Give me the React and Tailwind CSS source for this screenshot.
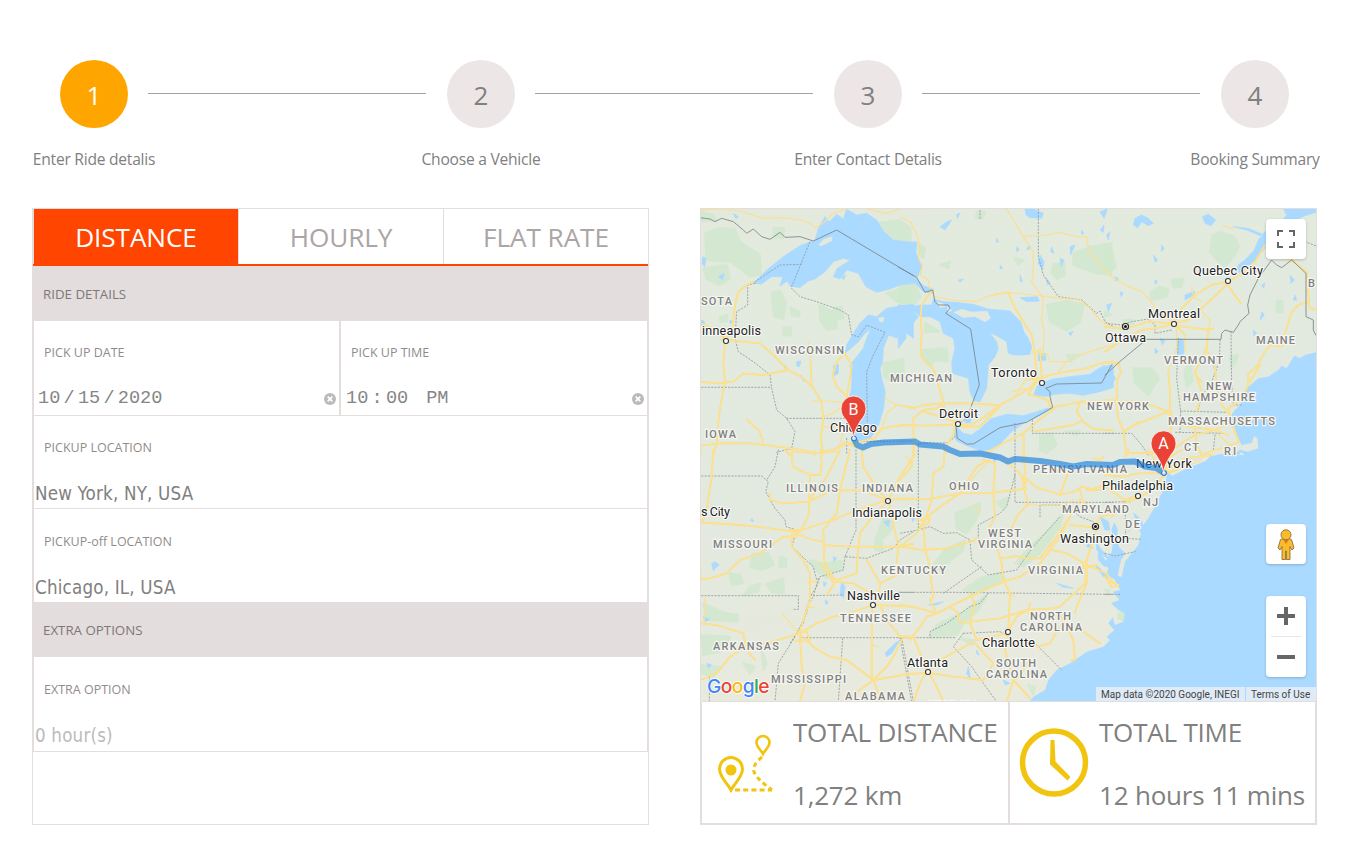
import React from "react";

const steps = [
  { n: 1, label: "Enter Ride detalis", active: true },
  { n: 2, label: "Choose a Vehicle" },
  { n: 3, label: "Enter Contact Detalis" },
  { n: 4, label: "Booking Summary" },
];

/* The map is drawn in tiles; every tile has its own offset on the 1845x1476 canvas. */
const tiles = [
  {
    x: -3, y: -12,
    parks: [
      "15,85 60,68 105,72 120,110 180,150 182,208 150,215 120,190 90,170 20,165", "0,20 40,30 50,45 0,50", "10,190 80,180 90,220 60,240 20,222",
      "220,70 252,68 250,100 222,98", "358,300 400,320 412,370 380,375 360,345", "272,308 300,320 296,335 275,330", "215,262 240,258 258,292 250,342 222,335",
      "250,368 275,366 272,392 250,390", "550,475 610,462 612,520 575,530 552,515", "530,55 600,45 632,70 632,110 590,108 560,80", "560,265 632,240 632,300 590,290", "400,310 425,305 430,340 408,345", "60,335 82,330 80,350 62,350",
    ],
    water: [
      "160,235 200,195 250,155 300,122 345,105 355,70 375,35 388,50 410,28 430,42 440,12 470,30 500,25 530,45 550,78 580,105 640,113 640,235 600,240 570,252 530,262 498,245 475,205 440,195 420,222 400,215 412,190 452,165 430,160 400,170 375,200 345,222 325,228 300,248 270,243 262,228 240,243 248,215 215,215 185,237",
      "505,330 530,335 560,310 600,303 640,298 640,400 620,385 600,360 592,400 566,390 550,430 548,470 540,490 545,520 556,560 551,610 536,660 515,695 490,712 470,708 455,680 447,640 445,590 454,550 456,520 450,480 470,455 490,430 500,400 512,372 495,385 475,410 455,428 435,445 440,420 462,382 480,355",
      "400,482 415,478 415,505 403,512", "8,155 18,160 14,185 6,175", "55,215 72,205 68,225", "0,345 12,348 15,362 0,360",
      "290,470 303,468 298,485 290,482", "100,25 115,35 108,42", "425,215 438,210 430,225",
      "300,510 306,515 312,530", "255,480 260,492 252,488", "90,345 98,350 90,356",
    ],
    land: ["355,120 370,103 398,94 395,108 365,123", "535,338 552,335 550,352 538,350"],
    minor: [
      "0,15 60,12 120,18 190,40 250,38 300,45 330,55 345,68 375,50 400,25 440,12", "325,410 332,470", "335,588 380,588 430,592", "370,665 430,668",
      "372,635 400,625 430,600", "555,580 590,600 560,625 545,670", "590,600 640,607", "0,722 5,750", "430,680 420,720 400,735", "500,12 560,25 600,12",
    ],
    major: [
      "160,230 140,240 115,260 105,300 98,365 82,395", "0,355 25,365 60,385 80,405", "80,405 110,408 180,415 220,450 265,495 310,520 340,550 365,590 370,640 362,700 370,745",
      "75,405 70,470 75,530 60,610 55,650 50,720 40,750", "0,530 60,535 100,530 130,505 190,510 265,495", "332,470 335,545", "435,445 410,470 398,510 410,545 440,575",
      "435,445 455,480 450,520 440,575 447,600", "0,722 60,715 150,715 260,728 300,735 350,745", "140,643 180,680 188,710", "545,670 525,700 470,712 430,715", "540,675 570,665 640,660", "362,740 400,735 440,715 480,730", "62,405 100,405", "255,735 270,750",
    ],
    dashed: [
      "165,235 143,240 143,300 110,320 105,400 115,440 160,470 210,510 215,550 230,615 260,640 285,680 275,730 230,742", "5,547 215,547", "260,640 440,640", "275,245 330,110",
      "165,230 240,180 305,178", "275,250 300,275 350,290 420,315 445,330 455,390 475,395 500,360 555,382 520,450 500,500 502,650", "440,700 440,750", "480,710 640,708",
    ],
    solid: ["0,38 30,42 45,50 65,40 100,50 130,75 140,85 160,72 185,95 210,103 240,82 255,97 300,95 340,108 410,75 640,212"],
  },
  {
    x: 597, y: -12,
    parks: [
      "0,240 45,235 62,275 40,302 0,292", "75,352 118,380 75,382", "68,435 140,430 143,470 105,465 90,485 70,460", "440,300 500,288 552,300 540,350 500,378 450,350",
      "520,145 570,125 635,115 635,210 590,205 560,195 520,180", "460,178 492,172 495,210 470,222 455,205", "420,690 455,685 470,720 440,745 420,735", "343,160 372,165 355,180", "230,20 255,22 245,42 228,38", "495,680 540,678 530,690", "120,180 150,170 145,190", "500,450 540,450 510,470", "55,115 75,130 70,160 58,150",
    ],
    water: [
      "-5,113 50,110 48,145 65,180 62,205 53,213 50,222 72,243 98,252 100,265 70,260 45,235 20,228 -5,235",
      "-5,300 25,302 50,325 62,335 90,335 120,350 130,385 160,400 165,430 155,470 157,505 205,520 210,560 222,588 240,590 260,550 262,520 265,480 285,455 295,430 290,410 268,382 290,392 320,410 325,445 342,450 365,450 390,448 395,425 385,400 372,382 362,350 330,318 265,312 220,298 170,292 130,290 100,282 95,300 62,300 30,305",
      "-5,300 28,305 55,335 42,352 18,370 18,400 -5,430",
      "170,665 190,685 215,690 240,672 272,642 320,628 370,632 410,620 440,610 458,610 420,632 370,655 335,680 290,728 245,738 200,722 170,708 160,690",
      "400,572 410,545 430,532 460,522 510,515 570,508 600,488 640,478 640,548 600,560 550,571 510,565 465,568 440,574",
      "415,447 435,445 438,465 415,468", "360,278 412,275 418,288 380,290", "193,630 215,625 212,652 197,655", "375,12 400,12 430,25 425,40 390,38 378,30",
      "120,65 140,50 155,45 135,75", "170,28 180,25 172,40", "420,150 432,170 428,195 415,175", "440,220 450,235 442,240", "480,160 492,165 484,185", "510,125 525,120 512,150", "388,120 380,135 392,130", "455,125 462,145 452,140", "545,75 552,85 544,88", "600,20 622,12 612,40", "600,75 612,60 610,82", "290,100 296,112 288,110", "175,225 190,222 180,232", "360,210 368,230 360,228", "300,180 308,190 300,192", "350,125 358,135 350,140", "505,385 520,378 512,392", "620,90 630,80 625,105",
    ],
    land: ["160,322 185,312 215,320 262,318 272,340 255,352 225,335 190,338", "110,290 128,295 138,305 120,308", "140,305 158,315 145,322"],
    minor: [
      "0,35 30,50 50,85 60,130 55,160 68,185 58,208 85,225 90,250", "320,12 340,45 370,95 400,140 400,210 395,230 420,265 430,280 425,340 432,380 430,440",
      "370,95 440,90 480,82 530,95 560,95 565,130 600,180 640,220", "100,275 160,285 230,290 260,275 320,262 400,270 470,278 540,285 570,310 600,345 640,370",
      "440,445 450,470 500,470 540,450 600,430 640,420", "335,560 380,550", "500,470 475,500", "380,520 340,580",
    ],
    major: [
      "285,268 325,262 345,310 370,350 395,390 402,430 410,500 405,530", "100,255 85,270 65,300 62,330 65,380 62,450 75,470 100,490 115,540 130,590", "0,600 40,610 70,600 130,595 200,595 290,600",
      "0,660 80,662 150,660 175,655", "42,750 40,640 70,615 110,610 130,595", "70,620 120,635 165,650", "175,660 215,658 250,638 300,600 340,578 390,550 410,525 440,512 500,500 560,490 600,475 640,470",
      "185,665 240,665 300,603", "410,530 385,568 430,580 450,590", "420,435 425,510", "440,582 450,605 465,608 430,635 370,685 300,720 255,745", "465,605 500,600 540,590 580,590 640,585",
      "540,590 530,620 550,650 580,672 640,676", "400,680 460,670 520,660 545,648", "370,685 372,745", "165,650 160,690 140,720", "400,440 420,440 430,450", "385,525 440,515", "130,595 135,635",
    ],
    dashed: ["415,12 415,155 430,210 475,275 545,285 590,325 600,318 615,350 640,365", "345,655 345,750", "55,750 55,715 145,713 165,695", "397,645 397,685 640,685", "215,600 200,640 172,660", "240,40 240,12"],
    solid: ["-5,186 50,217 75,262 98,255 105,290 115,300 145,300 150,310 137,325 212,372 238,540 215,600", "168,665 172,700 200,717 220,717 300,668 380,652 458,607 450,575 450,560 437,550 470,537 605,534 635,480"],
  },
  {
    x: 1212, y: -12,
    parks: [
      "322,92 345,80 388,95 402,125 390,150 360,185 335,165 315,140", "0,118 20,130 32,190 0,200", "135,262 165,245 190,252 185,275 140,285", "200,225 235,220 230,245 205,248", "85,490 140,490 162,520 130,570 90,535",
      "515,287 532,287 532,322 515,322", "238,500 258,470 262,530 245,545", "55,345 85,345 85,358 60,360", "375,455 398,450 392,475 378,490", "0,320 20,330 0,335",
    ],
    water: [
      "535,12 545,30 520,60 480,80 460,105 448,135 420,165 400,180 385,212 410,198 450,165 490,118 520,75 560,50 600,32 640,20 640,12", "218,402 234,402 238,440 226,468 218,448",
      "-5,480 18,500 32,520 15,545 -5,550", "90,40 110,30 130,40 145,55 130,62 110,50 98,68 85,60", "292,35 310,28 332,45 318,62 300,55", "240,270 270,258 265,270 240,285", "470,320 478,330 466,345",
      "165,400 180,405 172,420", "30,215 42,222 30,228", "145,150 158,165 150,172", "385,65 430,70 472,88 465,92 425,75", "555,210 568,225 558,235", "570,270 575,285 565,285", "170,120 178,130 170,140", "20,295 10,320 5,300", "45,260 55,265 48,275", "150,225 158,230 150,238", "325,470 332,475 326,490", "445,375 455,385 446,392", "150,430 160,440 150,446", "470,240 480,235 476,250",
    ],
    land: [],
    minor: ["0,195 20,215 60,240 110,260 130,280 160,320 200,350", "355,62 385,72", "260,245 265,275 290,290", "290,320 315,345 312,375", "340,690 375,720", "215,365 215,430 190,500", "240,390 240,440", "100,650 55,680"],
    major: [
      "0,440 60,400 110,375 150,370 205,358", "0,365 60,372 130,350 205,355", "205,355 230,310 270,270 320,240 370,230 420,200 450,170 480,120", "205,355 250,345 300,300 365,240", "365,235 385,265 408,295",
      "210,365 240,365 310,375 325,370", "213,360 240,390", "190,500 195,560 195,610 200,640 190,740", "310,370 305,430 270,500 290,560 275,620", "300,430 330,480 335,540 350,600 375,630", "0,472 40,475 48,500 35,530 35,600 40,640 55,680 65,750",
      "0,590 100,590 150,605 190,620 195,650 250,665 330,675 375,650", "55,680 100,655 190,620", "375,640 370,610 400,590 430,540 430,505 455,485 480,440 495,420 530,425 545,370 560,320 580,300 612,290 605,200 560,165 520,155", "435,530 465,480",
      "375,640 390,680 402,710 380,720 330,735 290,750", "270,670 275,720 290,750", "60,745 190,742 230,715 270,690 330,675", "610,290 615,310 635,315", "290,530 270,510", "330,675 370,690",
    ],
    dashed: ["0,685 80,685 110,720 130,750", "220,400 215,520 227,620 225,680", "345,405 343,470 320,530 290,575 277,620", "378,380 380,540 385,600 410,600", "227,618 370,622", "212,682 360,685", "330,690 325,735", "0,355 50,360 80,350 130,342 150,360 150,385 200,375", "600,110 640,125"],
    solid: ["0,510 50,465 125,403 348,403 350,385 360,375 385,382 400,360 405,350 432,325 428,300 435,270 460,220 500,165 515,180 530,188 560,165 603,205 603,335 625,345 625,375 632,390"],
  },
  {
    x: -3, y: 723,
    parks: [
      "158,312 205,308 222,345 185,360 150,350", "198,402 250,385 252,430 215,428", "88,370 122,375 130,400 95,405", "330,330 370,340 425,332 430,360 400,365 380,385 340,355", "10,460 80,490 115,495 112,515 20,510",
      "5,555 90,560 85,580 60,605 10,615", "550,205 580,215 575,240 545,270 550,305 525,300 525,270", "180,400 175,425 130,435 150,410", "240,320 260,325 258,352 238,350", "185,600 200,640 190,660", "130,640 165,650 150,670", "0,645 60,650 40,680 0,670",
    ],
    water: ["35,342 45,335 58,345 48,352 40,362", "425,395 435,410 430,445 420,430", "555,610 585,580 600,570 575,610 560,620", "550,215 570,210 565,230", "375,450 385,455 378,465", "155,205 162,215 152,212", "400,320 410,325 402,335", "20,640 35,645 25,655", "370,395 380,400 372,410", "10,500 30,508 15,515"],
    land: [],
    minor: ["275,5 340,10 420,5", "245,490 280,530 295,550", "0,320 3,385", "15,440 12,520", "345,18 345,0", "515,585 535,590", "320,470 345,472"],
    major: [
      "40,0 35,80 20,180 8,215", "0,218 80,222 170,230 280,245", "275,0 278,50 330,75 360,75 365,40 362,0", "420,0 400,40 380,80 350,120 325,155 250,160 210,150 210,130", "330,75 328,155 325,200 300,245",
      "450,0 420,120 410,190 370,240 372,330 390,370 410,395", "325,155 400,120 490,122 560,150 640,145", "280,248 400,210 470,180 560,150", "280,248 340,270 370,275", "290,260 250,260 180,310 120,330 80,370 30,385 0,388",
      "370,285 440,290 600,290 640,282", "270,240 300,240 280,262", "275,255 275,290 310,330 330,370 330,450 300,540", "485,0 490,50 520,100 560,150", "640,20 600,80 565,150 580,220 595,290 590,340", "560,155 510,210 480,250 472,320 470,370 410,390 380,435",
      "360,340 400,395 460,400 510,430 520,450", "500,330 540,400 600,370", "540,400 535,450", "0,520 50,525 130,550", "130,550 140,600 165,630", "130,595 200,580 300,550", "300,550 350,520 400,500 430,495 520,465 640,470", "295,550 340,590 390,620 440,630 520,690",
      "300,560 305,650 315,700 300,755", "285,572 330,572 320,545 295,545", "515,465 515,690", "540,465 560,510 600,560 640,560", "520,690 560,650 580,620 608,565", "520,690 640,670", "520,690 430,755", "520,690 545,755", "0,690 50,670 90,620 130,595", "350,395 325,395",
    ],
    dashed: [
      "5,78 185,78 205,95 197,125 225,175 255,210 258,230 290,240 275,290 340,350 350,390", "235,0 225,50 200,90", "468,0 468,240 435,320 500,325 580,295 600,270 640,245", "435,320 430,360 360,380 350,410 330,440 320,490 285,560 235,640 225,755",
      "5,437 295,437 295,478 278,478", "355,385 340,440 320,470 310,520 270,580", "330,437 430,435", "300,563 605,563", "428,565 415,755", "605,563 640,755", "595,427 640,427", "28,680 28,755",
    ],
    solid: [],
  },
  {
    x: 597, y: 723,
    parks: [
      "165,190 240,158 240,185 225,215 200,250 170,235", "90,355 135,300 195,270 190,300 120,360", "345,340 390,290 450,235 490,190 480,230 420,310 370,350", "190,420 240,385 300,368 315,385 220,435", "88,560 110,525 190,485 265,430 235,480 195,515 170,555", "180,565 225,570 215,585", "385,705 405,710 400,735", "290,155 330,140 310,180",
    ],
    water: ["85,465 130,455 110,465", "590,280 605,300 635,330 615,320 590,300", "585,345 600,355 625,385 610,380", "205,650 212,690 200,670", "565,280 580,295 560,290", "35,200 45,205 38,215", "470,400 520,415 490,412", "230,600 238,615 230,612", "310,690 330,700 315,705", "280,20 290,30 282,35"],
    land: [],
    minor: ["380,165 490,165 520,150", "180,130 230,70 270,30", "235,190 225,165", "320,430 345,440", "35,45 20,20"],
    major: [
      "40,0 35,50 0,90", "135,0 130,50 100,70 95,150 75,210", "0,145 80,148 180,130 260,130 345,120 380,115", "255,35 230,50 180,130", "250,30 285,40 280,130 285,200 270,230", "70,210 120,170 180,130", "75,210 50,250 0,290",
      "70,215 75,300 85,330 100,440 90,450 110,490", "0,290 70,300 140,295 230,270", "50,210 90,205 85,220 60,225", "320,35 360,70 375,110 380,85 405,110 480,135 520,125 545,110 580,118 640,90", "370,0 375,60 370,110 385,160 350,200 335,235", "480,135 500,80 510,45",
      "225,265 290,290 305,340 310,395", "305,325 350,318 370,325 420,325 470,260 510,200", "310,395 360,380 420,340 450,300 480,260 515,190", "310,395 230,430 150,470 110,490 60,475 0,465", "315,400 330,430 325,540", "455,300 500,310 560,345 620,370 640,400",
      "510,225 585,232 600,200 640,190", "590,235 560,330 555,400 480,470 460,475", "560,345 560,400 530,470 525,490", "110,490 80,500 60,530 30,570", "210,430 225,460 210,515 300,505 380,480 460,475", "150,470 175,490 180,517 210,518 230,570 320,550 350,500 380,480",
      "390,460 385,490 400,480", "325,550 315,600 340,690 390,745", "0,675 80,668 160,680 250,690", "250,690 265,665 280,640 225,580", "80,665 120,630 220,575", "85,665 110,710 130,755", "80,665 60,700 40,755", "0,560 40,560 80,660", "410,590 450,580 470,545 490,520 550,545 600,580",
      "480,495 520,570 525,630 515,630", "340,690 320,755", "380,640 360,680 340,690", "580,25 600,30 610,20", "540,120 550,160 585,170", "600,120 560,120", "515,190 540,150", "560,330 545,355 590,345",
    ],
    dashed: [
      "55,0 55,240 0,250", "345,20 345,157 490,157 640,157", "55,240 90,230 130,250 170,248 210,270 215,330 265,375 350,360 400,290 480,200", "345,75 320,170 300,190 235,225 235,270 205,275", "420,200 420,165 500,165 540,200 580,215", "0,427 160,427 640,433", "245,350 130,430",
      "265,430 240,460 210,470 140,520 90,545 90,563", "0,563 165,563", "0,563 35,755", "190,550 300,545 330,560", "400,575 485,660", "190,550 160,590 215,650 250,700 290,755",
    ],
    solid: [],
  },
  {
    x: 1212, y: 723,
    parks: ["42,488 60,490 55,512 40,505", "0,420 15,420 10,435", "60,220 80,230 70,245"],
    water: ["-20,300 0,330 12,345 -2,350 -20,330", "-15,200 10,215 15,240 0,240"],
    land: [],
    minor: ["190,70 230,55 290,30", "60,150 90,140"],
    major: ["0,75 60,80 100,70 170,70 220,58", "165,70 220,40 240,25 320,15", "178,75 140,120 100,145 65,155 40,180 20,200", "0,110 60,150 100,135", "0,380 20,412 42,405 15,395", "130,0 150,30 175,65", "60,20 70,0", "180,60 195,20 230,0"],
    dashed: ["60,155 62,265 110,268", "0,310 30,318 90,305", "0,433 50,433", "75,155 0,157"],
    solid: [],
  },
];

const atlantic =
  "1852,428 1812,438 1797,448 1780,440 1772,453 1757,478 1742,470 1732,483 1702,503 1672,508 1642,533 1627,563 1617,588 1597,608 1587,628 1600,653 1612,688 1622,708 1652,703 1660,678 1648,674 1669,688 1672,718 1640,728 1618,722 1595,735 1560,735 1530,742 1500,748 1450,760 1400,788 1397,803 1387,843 1367,883 1342,928 1327,948 1322,933 1297,910 1307,948 1320,973 1312,1008 1292,1033 1272,1058 1262,1103 1250,1101 1260,1053 1274,1033 1254,1015 1248,985 1250,960 1240,940 1232,960 1236,1000 1232,1030 1210,1060 1222,1080 1215,1098 1240,1110 1257,1143 1235,1148 1255,1173 1230,1183 1252,1203 1272,1213 1267,1238 1242,1248 1235,1225 1222,1243 1240,1263 1217,1283 1227,1293 1207,1313 1157,1328 1107,1363 1067,1383 1042,1413 1032,1443 997,1463 975,1490 1852,1490";

const states = [
  ["SOTA", 701, 305, 31], ["IOWA", 705, 438, 31], ["WISCONSIN", 775, 354, 69], ["MICHIGAN", 890, 382, 62], ["NEW YORK", 1087, 410, 62], ["VERMONT", 1164, 364, 59],
  ["MAINE", 1256, 344, 39], ["NEW", 1206, 390, 26], ["HAMPSHIRE", 1183, 401, 72], ["MASSACHUSETTS", 1168, 425, 107], ["CT", 1184, 451, 15], ["RI", 1224, 455, 12],
  ["B", 1308, 287, 7], ["ILLINOIS", 786, 492, 52], ["INDIANA", 862, 492, 51], ["MISSOURI", 713, 548, 59], ["OHIO", 949, 490, 30], ["PENNSYLVANIA", 1033, 473, 94],
  ["WEST", 988, 537, 33], ["VIRGINIA", 978, 548, 54], ["MARYLAND", 1062, 513, 67], ["NJ", 1143, 506, 15], ["DE", 1125, 528, 15], ["KENTUCKY", 881, 574, 65],
  ["VIRGINIA", 1028, 574, 55], ["TENNESSEE", 840, 622, 71], ["ARKANSAS", 713, 650, 66], ["NORTH", 1030, 620, 41], ["CAROLINA", 1020, 631, 62], ["SOUTH", 996, 667, 40],
  ["CAROLINA", 986, 678, 61], ["MISSISSIPPI", 771, 683, 75], ["ALABAMA", 845, 700, 60], ["GEORGIA", 926, 709, 52],
];

const cities = [
  ["inneapolis", 702, 335, 59], ["Toronto", 991, 377, 46], ["Detroit", 939, 418, 39], ["Chicago", 830, 432, 47], ["Quebec City", 1193, 275, 70], ["Montreal", 1148, 318, 52],
  ["Ottawa", 1105, 342, 41], ["New York", 1136, 468, 56], ["Philadelphia", 1102, 490, 71], ["Indianapolis", 852, 517, 70], ["s City", 701, 516, 29], ["Washington", 1060, 543, 69],
  ["Nashville", 847, 600, 53], ["Charlotte", 982, 647, 53], ["Atlanta", 907, 667, 41],
];

const townDots = [[726, 341], [1042, 383], [958, 424], [1228, 281], [1174, 324], [1138, 496], [888, 501], [873, 605], [1008, 632], [928, 672]];
const capitals = [[1125.5, 326.5], [1095.5, 526.5]];

function Lines({ items, ...rest }) {
  return items.map((p, i) => <polyline key={i} points={p} fill="none" strokeLinejoin="round" strokeLinecap="round" {...rest} />);
}

function Layer({ name, render }) {
  return tiles.map((t, i) => (
    <g key={i} transform={`translate(${t.x} ${t.y})`}>{render(t[name])}</g>
  ));
}

function Pin({ x, y, letter }) {
  return (
    <g transform={`translate(${x} ${y})`}>
      <path d="M0 0C-1-8-4-12-7.5-18C-10-21-12.5-24-12.5-29.5A12.5 12.5 0 0 1 12.5-29.5C12.5-24 10-21 7.5-18C4-12 1-8 0 0Z" fill="#ea4335" stroke="#fff" strokeWidth=".8" />
      <text x="0" y="-23.5" textAnchor="middle" fontSize="16" fill="#fff" className="font-[Roboto,sans-serif]">{letter}</text>
    </g>
  );
}

function MapCanvas() {
  return (
    <svg viewBox="0 0 1845 1476" width="615" height="492" className="block">
      <defs>
        <linearGradient id="terrain" x1="0" y1="0" x2="0.2" y2="1">
          <stop offset="0" stopColor="#e3eadd" />
          <stop offset=".55" stopColor="#e2e9df" />
          <stop offset="1" stopColor="#e8eadd" />
        </linearGradient>
      </defs>
      <rect width="1845" height="1476" fill="url(#terrain)" />
      <Layer name="parks" render={(a) => a.map((p, i) => <polygon key={i} points={p} fill="#cfe8cd" opacity=".75" stroke="#cfe8cd" strokeWidth="6" strokeLinejoin="round" />)} />
      <polygon points={atlantic} fill="#aadaff" />
      <Layer name="water" render={(a) => a.map((p, i) => <polygon key={i} points={p} fill="#aadaff" stroke="#aadaff" strokeWidth="2" strokeLinejoin="round" />)} />
      <Layer name="land" render={(a) => a.map((p, i) => <polygon key={i} points={p} fill="#e3e9de" />)} />
      <polygon points="1402,783 1442,766 1502,748 1536,732 1515,755 1497,763 1452,781 1412,801" fill="#e8eadd" />
      <polygon points="1612,738 1622,730 1630,738" fill="#e8eadd" />
      <Layer name="dashed" render={(a) => <Lines items={a} stroke="#939ca1" strokeWidth="2.6" strokeDasharray="4 6" />} />
      <Layer name="minor" render={(a) => <Lines items={a} stroke="#fbdf92" strokeWidth="3.6" />} />
      <Layer name="major" render={(a) => <Lines items={a} stroke="#fbdb80" strokeWidth="5.4" />} />
      <Layer name="major" render={(a) => <Lines items={a} stroke="#ffe493" strokeWidth="2.6" />} />
      <Layer name="solid" render={(a) => <Lines items={a} stroke="#7d868c" strokeWidth="2.6" />} />
      <g transform="scale(3) translate(-701 -209)">
        <g className="font-[Roboto,sans-serif]" fontSize="11" fontWeight="500" fill="#80807e" stroke="#f5f6f2" strokeWidth="2.5" paintOrder="stroke" strokeLinejoin="round">
          {states.map(([t, x, y, w], i) => <text key={i} x={x} y={y - 0.5} textLength={w}>{t}</text>)}
        </g>
        {townDots.map(([x, y], i) => <circle key={i} cx={x} cy={y} r="2.5" fill="#fff" stroke="#333" strokeWidth="1.1" />)}
        {capitals.map(([x, y], i) => (
          <g key={i}>
            <circle cx={x} cy={y} r="3" fill="#fff" stroke="#222" strokeWidth="1.2" />
            <circle cx={x} cy={y} r="1.5" fill="#111" />
          </g>
        ))}
        <g className="font-[Roboto,sans-serif]" fontSize="12.6" fill="#202124" stroke="#fbfbf8" strokeWidth="2.2" paintOrder="stroke" strokeLinejoin="round">
          {cities.map(([t, x, y, w], i) => <text key={i} x={x} y={y - 0.5} textLength={w}>{t}</text>)}
        </g>
        <polyline
          points="854,439 857,445 863,447.5 871,444 884,442.5 900,442 915,441.5 920,444.5 943,446.5 950,450 960,454 980,453.5 1000,457.5 1008,461.5 1015,459 1040,461 1060,464 1073,466.5 1087,464 1113,465 1120,462 1135,461.5 1145,466.5 1156,468 1164,473"
          fill="none" stroke="#1a80de" strokeOpacity=".65" strokeWidth="6" strokeLinejoin="round" strokeLinecap="round"
        />
        <circle cx="854" cy="438.500" r="2.400" fill="#cfe6ff" stroke="#2b6cb0" strokeWidth="1" />
        <circle cx="1164" cy="473" r="2.400" fill="#cfe6ff" stroke="#2b6cb0" strokeWidth="1" />
        <Pin x={853.5} y={438} letter="B" />
        <Pin x={1163.5} y={472.8} letter="A" />
      </g>
    </svg>
  );
}

function ClearIcon() {
  return (
    <svg width="12" height="12" viewBox="0 0 12 12" className="block">
      <circle cx="6" cy="6" r="6" fill="#bababa" />
      <path d="M3.7 3.7l4.6 4.6M8.3 3.7L3.7 8.3" stroke="#fff" strokeWidth="1.7" />
    </svg>
  );
}

function FieldLabel({ children }) {
  return <div className="pl-[10px] pt-[23px] text-[12.5px] leading-[18px] text-[#918c8c]">{children}</div>;
}

function FieldValue({ children, muted }) {
  return (
    <div className={`pl-px pt-[25px] font-['DejaVu_Sans_Condensed','DejaVu_Sans',sans-serif] text-[18.6px] leading-[24px] tracking-[0.2px] ${muted ? "text-[#bbb]" : ""}`}>
      {children}
    </div>
  );
}

function Section({ children }) {
  return <div className="flex h-[55px] items-center bg-[#e4dddd] pl-[10px] pt-[2px] text-[13.3px] text-[#7c7878]">{children}</div>;
}

export default function App() {
  return (
    <main className="h-[845px] w-[1355px] overflow-hidden bg-white font-['Open_Sans','Noto_Sans',sans-serif] text-[#808080]">
      <nav className="flex h-[208px] items-start pl-[60px] pt-[60px]">
        {steps.map((s, i) => (
          <React.Fragment key={s.n}>
            {i > 0 && <div className="ml-5 mr-[21px] mt-[33px] h-px w-[278px] shrink-0 bg-[#a2a2a2]" />}
            <div className="flex w-[68px] shrink-0 flex-col items-center">
              <div className={`flex size-[68px] items-center justify-center rounded-full pt-[3px] text-[26px] ${s.active ? "bg-[#ffa500] text-white" : "bg-[#ece6e6]"}`}>{s.n}</div>
              <div className="mt-5 whitespace-nowrap text-[15.6px] leading-[22px] tracking-[-0.24px]">{s.label}</div>
            </div>
          </React.Fragment>
        ))}
      </nav>

      <div className="flex gap-[51px] pl-8">
        <section className="h-[617px] w-[617px] border border-[#e4dddd]">
          <div className="flex h-[57px] border-b-2 border-[#ff4500] text-[26.2px] tracking-[-0.1px]">
            <div className="flex w-[205px] items-center justify-center border-l border-[#e4dddd] bg-[#ff4500] pt-[3px] text-white">DISTANCE</div>
            <div className="flex w-[206px] items-center justify-center border-x border-[#e4dddd] pt-[3px] text-[#aca5a5]">HOURLY</div>
            <div className="flex flex-1 items-center justify-center pt-[3px] text-[#aca5a5]">FLAT RATE</div>
          </div>
          <Section>RIDE DETAILS</Section>
          <div className="border-x border-[#e4dddd]">
            <div className="flex h-[95px] border-b border-[#e4dddd]">
              <div className="w-[307px] border-r-2 border-[#e4dddd]">
                <FieldLabel>PICK UP DATE</FieldLabel>
                <div className="flex items-center justify-between pl-1 pr-[3px] pt-[25px] font-['Liberation_Mono','Courier_New',monospace] text-[18.6px] leading-[24px] text-[#868686]">
                  <div className="flex"><span>10</span><span className="px-[3.2px]">/</span><span>15</span><span className="px-[3.2px]">/</span><span>2020</span></div>
                  <ClearIcon />
                </div>
              </div>
              <div className="flex-1">
                <FieldLabel>PICK UP TIME</FieldLabel>
                <div className="flex items-center justify-between pl-1 pr-[3px] pt-[25px] font-['Liberation_Mono','Courier_New',monospace] text-[18.6px] leading-[24px] text-[#868686]">
                  <div className="flex pl-px"><span>10</span><span className="px-[3.2px]">:</span><span>00</span><span className="pl-[18px]">PM</span></div>
                  <ClearIcon />
                </div>
              </div>
            </div>
            <div className="h-[93px] border-b border-[#e4dddd]">
              <FieldLabel>PICKUP LOCATION</FieldLabel>
              <FieldValue>New York, NY, USA</FieldValue>
            </div>
            <div className="h-[93px] pt-px">
              <FieldLabel>PICKUP-off LOCATION</FieldLabel>
              <FieldValue>Chicago, IL, USA</FieldValue>
            </div>
          </div>
          <Section>EXTRA OPTIONS</Section>
          <div className="h-[95px] border-x border-b border-[#e4dddd] pt-px">
            <FieldLabel>EXTRA OPTION</FieldLabel>
            <FieldValue muted>0 hour(s)</FieldValue>
          </div>
        </section>

        <section className="h-[617px] w-[617px] border border-[#e4dddd]">
          <div className="relative h-[492px] w-[615px] overflow-hidden">
            <MapCanvas />
            <button className="absolute right-[10px] top-[10px] flex size-10 items-center justify-center rounded-sm bg-white shadow-[0_1px_3px_rgba(0,0,0,0.2)]">
              <svg width="18" height="18" viewBox="0 0 18 18" fill="#666"><path d="M0 0v6h2V2h4V0zM16 0h-4v2h4v4h2V0zM16 16h-4v2h6v-6h-2zM2 12H0v6h6v-2H2z" /></svg>
            </button>
            <div className="absolute right-[10px] top-[315px] flex size-10 items-center justify-center rounded-sm bg-white shadow-[0_1px_3px_rgba(0,0,0,0.2)]">
              <svg width="18" height="31" viewBox="0 0 18 31" stroke="#8a7040" strokeWidth=".9" strokeLinejoin="round">
                <path d="M3.5 10.5L1 19l2 2 2-3.5v13h3.6V22h.8v8.5H13v-13l2 3.5 2-2-2.5-8.5L11.5 9.5h-5z" fill="#fbbc2c" />
                <path d="M6 10.5h6L9 15z" fill="#e2792b" stroke="none" />
                <circle cx="9" cy="5.8" r="5" fill="#fbbc2c" />
              </svg>
            </div>
            <div className="absolute right-[10px] top-[387px] flex h-[81px] w-10 flex-col items-center rounded-sm bg-white shadow-[0_1px_3px_rgba(0,0,0,0.2)]">
              <div className="flex h-10 items-center"><svg width="18" height="18" fill="#666"><path d="M7 0h4v7h7v4h-7v7H7v-7H0V7h7z" /></svg></div>
              <div className="h-px w-[30px] bg-[#e6e6e6]" />
              <div className="flex h-10 items-center"><svg width="18" height="4" fill="#666"><path d="M0 0h18v4H0z" /></svg></div>
            </div>
            <div className="absolute bottom-px left-[6px] flex h-[26px] items-center text-[19.2px] font-medium leading-none tracking-[-0.6px] [paint-order:stroke] [-webkit-text-stroke:1.5px_#fff] font-['Inter',sans-serif]">
              <span className="text-[#4285f4]">G</span><span className="text-[#ea4335]">o</span><span className="text-[#fbbc05]">o</span><span className="text-[#4285f4]">g</span><span className="text-[#34a853]">l</span><span className="text-[#ea4335]">e</span>
            </div>
            <div className="absolute bottom-0 right-0 flex h-[14px] gap-px whitespace-nowrap font-[Roboto,sans-serif] text-[10px] leading-[15px] text-[#444]">
              <span className="w-[149px] bg-[#dfebf7] pl-[5px]">Map data ©2020 Google, INEGI</span>
              <span className="w-[70px] bg-[#dfebf7] pl-[5px]">Terms of Use</span>
            </div>
          </div>
          <div className="flex h-[123px] border border-[#e4dddd] text-[26px] leading-[36px] tracking-[-0.2px]">
            <div className="flex w-[308px] border-r-2 border-[#e4dddd]">
              <svg width="91" height="121" viewBox="702 702 91 121" fill="none" stroke="#f1c40f" className="shrink-0">
                <path d="M731 790C728 784 719.5 777 719.5 769A11.5 11.5 0 0 1 742.5 769C742.5 777 734 784 731 790Z" strokeWidth="3" />
                <circle cx="731" cy="770" r="5.5" fill="#f1c40f" stroke="none" />
                <path d="M763 754C761 750 756.5 747 756.5 742.5A6.5 6.5 0 0 1 769.5 742.5C769.5 747 765 750 763 754Z" strokeWidth="2.6" />
                <path d="M762 757Q751 766 754.5 773T772 790" strokeWidth="3" strokeDasharray="4.5 3.5" />
                <path d="M735 790H772" strokeWidth="3" strokeDasharray="5 3.2" />
              </svg>
              <div className="whitespace-nowrap pt-3"><div>TOTAL DISTANCE</div><div className="mt-[27px]">1,272 km</div></div>
            </div>
            <div className="flex flex-1">
              <svg width="89" height="121" viewBox="1010 702 89 121" fill="none" stroke="#f1c40f" className="shrink-0">
                <circle cx="1054" cy="762.5" r="31.5" strokeWidth="5.5" />
                <path d="M1050.5 740h4L1055.5 761.5 1070.5 777 1067.5 780.5 1050 764.5z" fill="#f1c40f" stroke="none" />
              </svg>
              <div className="whitespace-nowrap pt-3"><div>TOTAL TIME</div><div className="mt-[27px]">12 hours 11 mins</div></div>
            </div>
          </div>
        </section>
      </div>
    </main>
  );
}
